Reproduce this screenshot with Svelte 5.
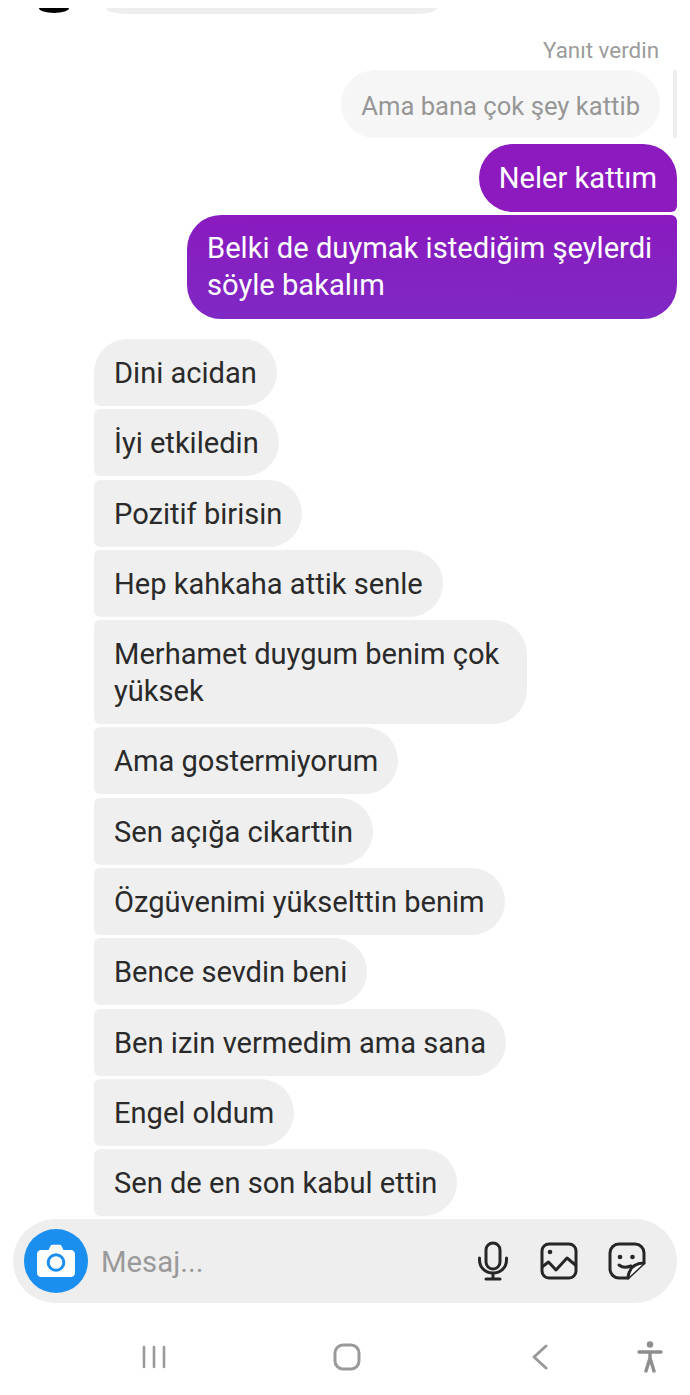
<script>
	const received = [
		"Dini acidan",
		"İyi etkiledin",
		"Pozitif birisin",
		"Hep kahkaha attik senle",
		"Merhamet duygum benim çok yüksek",
		"Ama gostermiyorum",
		"Sen açığa cikarttin",
		"Özgüvenimi yükselttin benim",
		"Bence sevdin beni",
		"Ben izin vermedim ama sana",
		"Engel oldum",
		"Sen de en son kabul ettin"
	];
</script>

<main class="screen">
	<div class="clipped">
		<span class="avatar"></span>
		<span class="prev"></span>
	</div>

	<section class="sent">
		<p class="reply-label">Yanıt verdin</p>
		<div class="reply-row">
			<div class="reply">Ama bana çok şey kattib</div>
			<span class="reply-bar"></span>
		</div>
		<div class="bubble mine first">Neler kattım</div>
		<div class="bubble mine last">Belki de duymak istediğim şeylerdi söyle bakalım</div>
	</section>

	<section class="inbox">
		{#each received as text}
			<div class="bubble theirs">{text}</div>
		{/each}
	</section>

	<div class="composer">
		<span class="camera">
			<svg width="40" height="36" viewBox="0 0 40 36">
				<path fill="#fff" d="M5 7h7.500l2-4c.4-.7 1-1.200 1.800-1.200h7.400c.8 0 1.400.5 1.800 1.200l2 4H35c2.200 0 4 1.800 4 4v19c0 2.200-1.800 4-4 4H5c-2.200 0-4-1.800-4-4V11c0-2.200 1.800-4 4-4z"/>
				<circle cx="20" cy="19.500" r="7.800" fill="none" stroke="#1a8ff0" stroke-width="3"/>
			</svg>
		</span>
		<span class="placeholder">Mesaj...</span>
		<div class="tools">
			<svg width="34" height="40" viewBox="0 0 34 40" fill="none" stroke="#262626" stroke-width="3" stroke-linecap="round">
				<rect x="10" y="2" width="14" height="26" rx="7"/>
				<path d="M3.500 17v2c0 7.500 6 13 13.500 13s13.500-5.500 13.500-13v-2M17 32v6M10 38h14"/>
			</svg>
			<svg width="38" height="38" viewBox="0 0 38 38" fill="none" stroke="#262626" stroke-width="3" stroke-linejoin="round">
				<rect x="2" y="2" width="34" height="34" rx="7"/>
				<circle cx="10" cy="10" r="2.300" fill="#262626" stroke="none"/>
				<path d="M2 25l6.500-5 7.500 8 11-12 9 7.500"/>
			</svg>
			<svg width="38" height="38" viewBox="0 0 38 38" fill="none" stroke="#262626" stroke-width="3" stroke-linecap="round" stroke-linejoin="round">
				<path d="M20 36h-9c-5 0-9-4-9-9V11c0-5 4-9 9-9h16c5 0 9 4 9 9v10z"/>
				<path d="M36 21c-9 0-15 5-16 15" fill="#fff"/>
				<path d="M11 23c3 2.500 7 3 12 1"/>
				<circle cx="12" cy="15" r="2.300" fill="#262626" stroke="none"/>
				<circle cx="24.500" cy="15" r="2.300" fill="#262626" stroke="none"/>
			</svg>
		</div>
	</div>

	<nav class="navbar">
		<svg width="26" height="24" viewBox="0 0 26 24" fill="none" stroke="#9a9a9a" stroke-width="2.600" stroke-linecap="round">
			<path d="M3 2v20M13 2v20M23 2v20"/>
		</svg>
		<svg class="home" width="28" height="28" viewBox="0 0 28 28" fill="none" stroke="#9a9a9a" stroke-width="3">
			<rect x="2" y="2" width="24" height="24" rx="8"/>
		</svg>
		<svg class="back" width="18" height="26" viewBox="0 0 18 26" fill="none" stroke="#9a9a9a" stroke-width="3" stroke-linecap="round" stroke-linejoin="round">
			<path d="M15 2L3 13l12 11"/>
		</svg>
		<svg class="access" width="26" height="32" viewBox="0 0 26 32">
			<circle cx="13" cy="3.500" r="3.200" fill="#8e8e8e"/>
			<path fill="none" stroke="#8e8e8e" stroke-width="3.400" stroke-linecap="round" stroke-linejoin="round" d="M2 11h22M13 11v6M13 17l-4 13M13 17l4 13"/>
		</svg>
	</nav>
</main>

<style>
:global(body) {
	margin: 0;
	background: #fff;
}
.screen {
	width: 690px;
	height: 1395px;
	overflow: hidden;
	font-family: Roboto, "Liberation Sans", sans-serif;
	font-size: 29.15px;
	box-sizing: border-box;
}
.clipped {
	height: 14px;
	padding-top: 8px;
	box-sizing: border-box;
	display: flex;
	align-items: flex-start;
	gap: 37px;
	margin-left: 39px;
	margin-bottom: -1px;
}
.avatar {
	width: 30px;
	height: 5px;
	background: #000;
	border-radius: 0 0 15px 15px / 0 0 5px 5px;
}
.prev {
	width: 331px;
	height: 6px;
	background: #eee;
	border-radius: 0 0 20px 20px / 0 0 6px 6px;
}
.sent {
	display: flex;
	flex-direction: column;
	align-items: flex-end;
	padding-right: 13px;
}
.reply-label {
	margin: 23px 18px 0 0;
	font-size: 22.4px;
	line-height: 28px;
	color: #9b9b9b;
}
.reply-row {
	display: flex;
	gap: 13px;
	margin-top: 6px;
}
.reply {
	background: #f6f6f6;
	color: #979797;
	font-size: 25.6px;
	line-height: 37px;
	padding: 18px 20px 13px;
	border-radius: 34px;
}
.reply-bar {
	width: 4px;
	background: #efefef;
}
.bubble {
	box-sizing: border-box;
	padding: 15px 20px;
	line-height: 37px;
}
.mine {
	color: #fff;
}
.first {
	margin-top: 6px;
	padding-top: 16px;
	background: #8d1abf;
	border-radius: 34px 34px 6px 34px;
}
.last {
	margin-top: 3px;
	width: 490px;
	background: linear-gradient(#8a1abf, #7f28c4);
	border-radius: 34px 6px 34px 34px;
}
.inbox {
	display: flex;
	flex-direction: column;
	align-items: flex-start;
	gap: 3.3px;
	margin-top: 20px;
	margin-left: 94px;
}
.theirs {
	max-width: 433px;
	padding: 16px 20px 14px;
	background: #efefef;
	color: #2a2a2a;
	font-size: 29.08px;
	border-radius: 34px 34px 34px 6px;
}
.theirs:not(:first-child) {
	border-top-left-radius: 6px;
}
.composer {
	display: flex;
	align-items: center;
	height: 84px;
	margin: 3px 13px 0 13px;
	padding: 0 31px 0 11px;
	background: #eee;
	border-radius: 42px;
	box-sizing: border-box;
}
.camera {
	width: 64px;
	height: 64px;
	border-radius: 50%;
	background: #1a8ff0;
	display: flex;
	align-items: center;
	justify-content: center;
	flex-shrink: 0;
}
.placeholder {
	margin-left: 13px;
	padding-top: 2px;
	font-size: 29.3px;
	color: #9a9a9a;
}
.tools {
	margin-left: auto;
	display: flex;
	align-items: center;
	gap: 30px;
}
.navbar {
	display: flex;
	align-items: center;
	margin-top: 38px;
	padding-left: 141px;
}
.home {
	margin-left: 166px;
}
.back {
	margin-left: 170px;
}
.access {
	margin-left: 88px;
}
</style>
